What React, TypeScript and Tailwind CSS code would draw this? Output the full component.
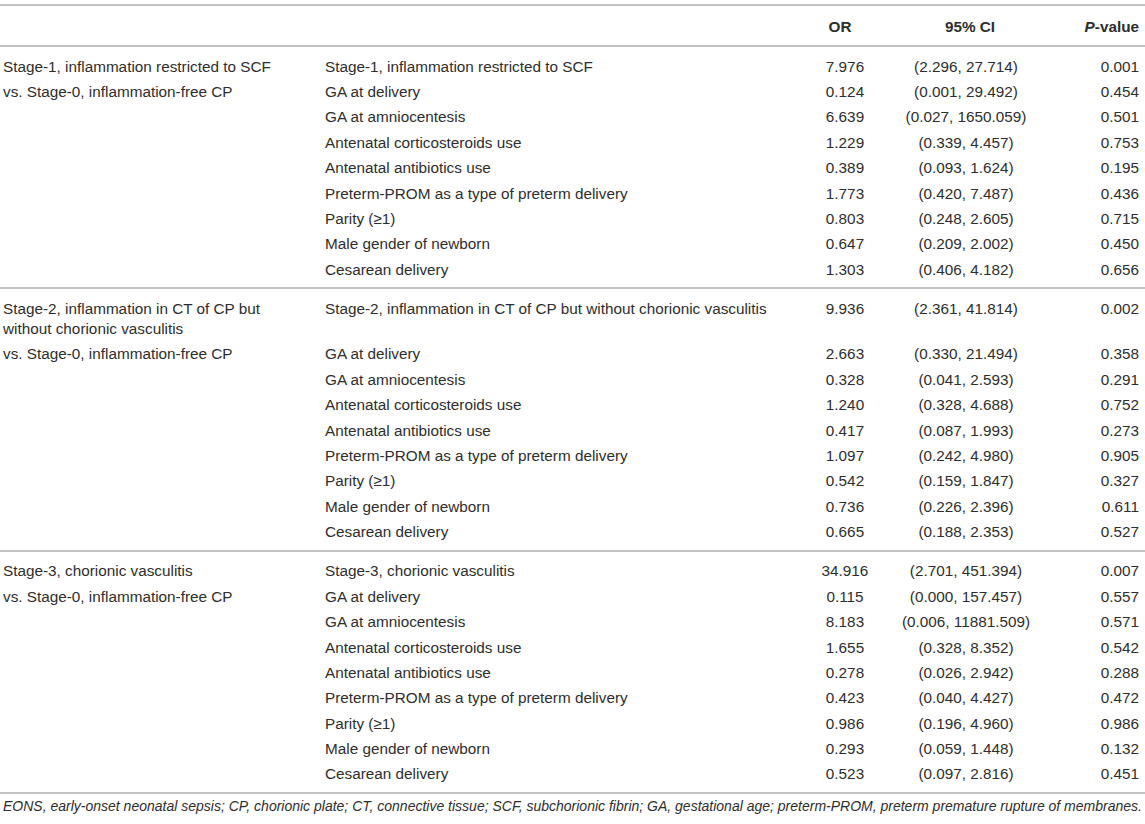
import React from 'react';

type Row = { label: string; or: string; ci: string; p: string };

const covariates = (first: string) => [
  first,
  'GA at delivery',
  'GA at amniocentesis',
  'Antenatal corticosteroids use',
  'Antenatal antibiotics use',
  'Preterm-PROM as a type of preterm delivery',
  'Parity (≥1)',
  'Male gender of newborn',
  'Cesarean delivery',
];

const groups: { head: string[]; rows: Row[] }[] = [
  {
    head: ['Stage-1, inflammation restricted to SCF', 'vs. Stage-0, inflammation-free CP'],
    rows: [
      ['7.976', '(2.296, 27.714)', '0.001'],
      ['0.124', '(0.001, 29.492)', '0.454'],
      ['6.639', '(0.027, 1650.059)', '0.501'],
      ['1.229', '(0.339, 4.457)', '0.753'],
      ['0.389', '(0.093, 1.624)', '0.195'],
      ['1.773', '(0.420, 7.487)', '0.436'],
      ['0.803', '(0.248, 2.605)', '0.715'],
      ['0.647', '(0.209, 2.002)', '0.450'],
      ['1.303', '(0.406, 4.182)', '0.656'],
    ].map((r, i) => ({ label: covariates('Stage-1, inflammation restricted to SCF')[i], or: r[0], ci: r[1], p: r[2] })),
  },
  {
    head: ['Stage-2, inflammation in CT of CP but without chorionic vasculitis', 'vs. Stage-0, inflammation-free CP'],
    rows: [
      ['9.936', '(2.361, 41.814)', '0.002'],
      ['2.663', '(0.330, 21.494)', '0.358'],
      ['0.328', '(0.041, 2.593)', '0.291'],
      ['1.240', '(0.328, 4.688)', '0.752'],
      ['0.417', '(0.087, 1.993)', '0.273'],
      ['1.097', '(0.242, 4.980)', '0.905'],
      ['0.542', '(0.159, 1.847)', '0.327'],
      ['0.736', '(0.226, 2.396)', '0.611'],
      ['0.665', '(0.188, 2.353)', '0.527'],
    ].map((r, i) => ({
      label: covariates('Stage-2, inflammation in CT of CP but without chorionic vasculitis')[i],
      or: r[0],
      ci: r[1],
      p: r[2],
    })),
  },
  {
    head: ['Stage-3, chorionic vasculitis', 'vs. Stage-0, inflammation-free CP'],
    rows: [
      ['34.916', '(2.701, 451.394)', '0.007'],
      ['0.115', '(0.000, 157.457)', '0.557'],
      ['8.183', '(0.006, 11881.509)', '0.571'],
      ['1.655', '(0.328, 8.352)', '0.542'],
      ['0.278', '(0.026, 2.942)', '0.288'],
      ['0.423', '(0.040, 4.427)', '0.472'],
      ['0.986', '(0.196, 4.960)', '0.986'],
      ['0.293', '(0.059, 1.448)', '0.132'],
      ['0.523', '(0.097, 2.816)', '0.451'],
    ].map((r, i) => ({ label: covariates('Stage-3, chorionic vasculitis')[i], or: r[0], ci: r[1], p: r[2] })),
  },
];

const GroupBody = ({ head, rows }: { head: string[]; rows: Row[] }) => (
  <tbody className="border-b-2 border-[#c2c2c2]">
    {rows.map((row, i) => {
      // first row of a group sits a bit lower, last row leaves room above the rule
      const pad =
        i === 0 ? 'pt-[9.7px] pb-[2.7px]' : i === rows.length - 1 ? 'pt-[2.7px] pb-[7.7px]' : 'py-[2.7px]';
      return (
        <tr key={i} className="align-top">
          <td className={`pl-[3px] pr-[30px] ${pad}`}>{head[i] ?? ''}</td>
          <td className={`pl-[3px] ${pad}`}>{row.label}</td>
          <td className={`text-center ${pad}`}>{row.or}</td>
          <td className={`text-center ${pad}`}>{row.ci}</td>
          <td className={`text-right pr-[6px] ${pad}`}>{row.p}</td>
        </tr>
      );
    })}
  </tbody>
);

export default function App() {
  return (
    <div className="w-[1145px] min-h-[824px] bg-white text-[#2e2e2e] font-['Liberation_Sans',Arial,sans-serif] text-[15.3px] leading-[20px]">
      <div className="pt-[4px]">
        <table className="w-[1145px] table-fixed border-collapse">
          <colgroup>
            <col className="w-[322px]" />
            <col className="w-[478px]" />
            <col className="w-[90px]" />
            <col className="w-[152px]" />
            <col className="w-[103px]" />
          </colgroup>
          <thead className="border-y-2 border-[#c2c2c2]">
            <tr className="font-bold">
              <th className="pt-[11px] pb-[8px]" />
              <th />
              <th className="text-center pr-[10px] pt-[11px] pb-[8px]">OR</th>
              <th className="text-center pl-[8px] pt-[11px] pb-[8px]">95% CI</th>
              <th className="text-right pr-[6px] pt-[11px] pb-[8px]">
                <i>P</i>-value
              </th>
            </tr>
          </thead>
          {groups.map((g, i) => (
            <GroupBody key={i} head={g.head} rows={g.rows} />
          ))}
        </table>
        <p className="pl-[3px] pt-[2px] italic text-[14px] leading-[20px] whitespace-nowrap">
          EONS, early-onset neonatal sepsis; CP, chorionic plate; CT, connective tissue; SCF, subchorionic fibrin; GA,
          gestational age; preterm-PROM, preterm premature rupture of membranes.
        </p>
      </div>
    </div>
  );
}
